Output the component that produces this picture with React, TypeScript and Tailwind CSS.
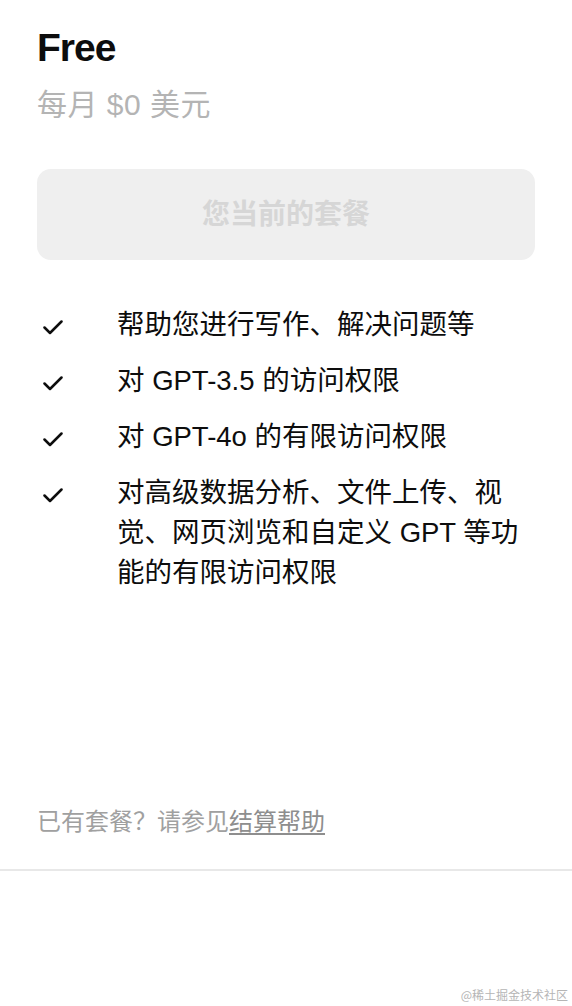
import React from "react";

const features: string[] = [
  "帮助您进行写作、解决问题等",
  "对 GPT-3.5 的访问权限",
  "对 GPT-4o 的有限访问权限",
  "对高级数据分析、文件上传、视觉、网页浏览和自定义 GPT 等功能的有限访问权限",
];

function Check() {
  return (
    <svg width="20" height="15" viewBox="0 0 20 15" fill="none" className="block">
      <path d="M1.5 7.5 L7 13 L18.5 1.5" stroke="#0d0d0d" strokeWidth="2.5" strokeLinecap="round" strokeLinejoin="round" />
    </svg>
  );
}

export default function App() {
  return (
    <div
      className="relative w-full h-[1006px] bg-white overflow-hidden"
      style={{ fontFamily: '"Liberation Sans", "Noto Sans CJK SC", sans-serif' }}
    >
      <div className="px-[37px] pt-[24px]">
        <div className="text-[39px] leading-[48px] font-bold tracking-[-1px] text-[#0d0d0d]">Free</div>
        <div className="mt-[15px] text-[30px] leading-[36px] tracking-[0.5px] text-[#b4b4b4]">每月 $0 美元</div>
        <div className="mt-[46px] h-[91px] rounded-[14px] bg-[#efefef] flex items-center justify-center">
          <span className="text-[28px] leading-[36px] font-bold text-[#d6d6d6]">您当前的套餐</span>
        </div>
        <ul className="mt-[45px] flex flex-col gap-[16px]">
          {features.map((f) => (
            <li key={f} className="flex">
              <div className="w-[80px] shrink-0 h-[40px] flex items-center pl-[6px] pt-[5px]">
                <Check />
              </div>
              <div className="text-[27.5px] leading-[40px] text-[#0d0d0d]">{f}</div>
            </li>
          ))}
        </ul>
      </div>
      <div className="px-[37px] mt-[213px]">
        <div className="text-[24px] leading-[32px] text-[#a0a0a0]">
          已有套餐？请参见<span className="underline underline-offset-[3px] text-[#8e8e8e]">结算帮助</span>
        </div>
      </div>
      <div className="mt-[31px] h-[2px] bg-[#e8e8e8]" />
      <div className="absolute right-[4px] bottom-[3px] text-[12px] leading-[16px] text-[#b5b5b5]" style={{ fontFamily: '"Noto Sans CJK SC", serif' }}>
        @稀土掘金技术社区
      </div>
    </div>
  );
}
